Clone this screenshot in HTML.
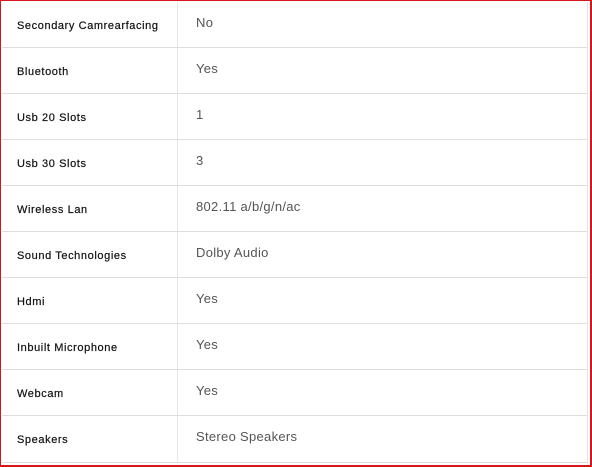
<!DOCTYPE html>
<html><head><style>
body{margin:0;width:592px;height:467px;overflow:hidden;background:#fff;font-family:"Liberation Sans",sans-serif;position:relative;}
.frame{position:absolute;left:0;top:0;width:589px;height:464px;border:1px solid #d8141c;border-right-width:2px;border-bottom-width:2px;}
.inner{position:absolute;left:2px;top:2px;width:585px;height:460px;border-right:1px solid #e2e2e2;border-bottom:1px solid #ddd;}
.div{position:absolute;left:177px;top:2px;width:1px;height:461px;background:#e6e6e6;}
.row{position:absolute;left:2px;width:585px;height:45px;border-bottom:1px solid #ddd;}
.l{position:absolute;left:15px;top:17px;font-size:11px;color:#111;letter-spacing:0.6px;line-height:14px;-webkit-text-stroke:0.2px #111;}
.v{position:absolute;left:194px;top:13px;font-size:13px;color:#555;letter-spacing:0.3px;line-height:16px;}
</style></head><body>
<div class="frame"></div>
<div class="inner"></div>
<div class="row" style="top:2px"><span class="l">Secondary Camrearfacing</span><span class="v">No</span></div>
<div class="row" style="top:48px"><span class="l">Bluetooth</span><span class="v">Yes</span></div>
<div class="row" style="top:94px"><span class="l">Usb 20 Slots</span><span class="v">1</span></div>
<div class="row" style="top:140px"><span class="l">Usb 30 Slots</span><span class="v">3</span></div>
<div class="row" style="top:186px"><span class="l">Wireless Lan</span><span class="v">802.11 a/b/g/n/ac</span></div>
<div class="row" style="top:232px"><span class="l">Sound Technologies</span><span class="v">Dolby Audio</span></div>
<div class="row" style="top:278px"><span class="l">Hdmi</span><span class="v">Yes</span></div>
<div class="row" style="top:324px"><span class="l">Inbuilt Microphone</span><span class="v">Yes</span></div>
<div class="row" style="top:370px"><span class="l">Webcam</span><span class="v">Yes</span></div>
<div class="row" style="top:416px;border-bottom:none"><span class="l">Speakers</span><span class="v">Stereo Speakers</span></div>
<div class="div"></div>
</body></html>
